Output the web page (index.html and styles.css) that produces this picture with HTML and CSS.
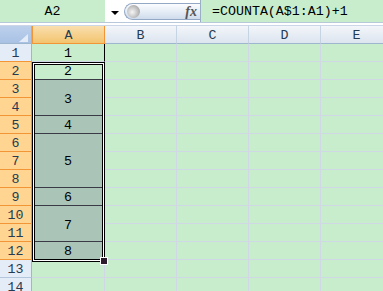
FILE: index.html
```html
<!DOCTYPE html>
<html>
<head>
<meta charset="utf-8">
<link rel="stylesheet" href="styles.css">
</head>
<body>
<div class="fbar">
  <div class="namebox">A2</div>
  <div class="dd"><svg width="8" height="4" viewBox="0 0 8 4"><polygon points="0,0 8,0 4,4" fill="#000"/></svg></div>
  <div class="pill"><span class="orb"></span><span class="fx">fx</span></div>
  <div class="formula">=COUNTA(A$1:A1)+1</div>
</div>
<div class="sep"></div>
<div class="sheet">
  <div class="rowheads">
    <div class="corner"></div>
    <div class="rh r1">1</div>
    <div class="rh sel">2</div>
    <div class="rh sel">3</div>
    <div class="rh sel">4</div>
    <div class="rh sel">5</div>
    <div class="rh sel">6</div>
    <div class="rh sel">7</div>
    <div class="rh sel">8</div>
    <div class="rh sel">9</div>
    <div class="rh sel">10</div>
    <div class="rh sel">11</div>
    <div class="rh sel">12</div>
    <div class="rh">13</div>
    <div class="rh">14</div>
  </div>
  <div class="colA">
    <div class="ch csel">A</div>
    <div class="cell a1">1</div>
    <div class="cell act">2</div>
    <div class="cell sc h2">3</div>
    <div class="cell sc">4</div>
    <div class="cell sc h3">5</div>
    <div class="cell sc">6</div>
    <div class="cell sc h2">7</div>
    <div class="cell sc">8</div>
    <div class="cell"></div>
    <div class="cell"></div>
  </div>
  <div class="rest">
    <div class="heads">
      <div class="ch">B</div>
      <div class="ch">C</div>
      <div class="ch">D</div>
      <div class="ch">E</div>
    </div>
    <div class="blank"></div>
  </div>
  <div class="selection"><span class="handle"></span></div>
</div>
</body>
</html>
```

FILE: styles.css
```css
* { box-sizing: border-box; margin: 0; padding: 0; }
html, body { width: 383px; height: 291px; overflow: hidden; background: #fff; }
body { font-family: "Liberation Mono", "DejaVu Sans Mono", monospace; font-size: 13.3px; color: #000; }

.fbar { display: flex; height: 22px; background: #fff; }
.namebox { width: 105px; background: #c7edcc; display: flex; align-items: center; justify-content: center; color: #000; padding-top: 1px; }
.dd { width: 19px; display: flex; align-items: center; justify-content: center; padding-top: 4px; }
.dd svg { display: block; }
.pill {
  align-self: flex-start; margin-top: 3px; width: 76px; height: 17px;
  border: 1px solid #93a8c4; border-right: none; border-radius: 9px 0 0 9px;
  background: linear-gradient(#fbfcfe, #e6edf6 50%, #cfdbec);
  display: flex; align-items: center; justify-content: space-between;
  padding: 0 3px 0 2px;
}
.orb {
  width: 13px; height: 13px; border-radius: 50%;
  background: radial-gradient(circle at 40% 55%, #f6f6f6 0, #c9c9c9 45%, #8c8c8c 100%);
}
.fx { font-family: "Liberation Serif", serif; font-style: italic; font-weight: bold; font-size: 14px; color: #555; padding-top: 1px; }
.formula { flex: 1; background: #c7edcc; border-left: 1px solid #9aaec6; padding-left: 11px; padding-top: 1px; display: flex; align-items: center; }

.sep { height: 4px; border-top: 1px solid #b7c8db; border-bottom: 1px solid #cbd7e6; background: #fff; }

.sheet { position: relative; display: flex; height: 265px; overflow: hidden; }
.rowheads { width: 32px; display: flex; flex-direction: column; flex: none; }
.corner {
  height: 18px; position: relative; flex: none;
  background: linear-gradient(#bcd0ec, #a9c2e4);
  border-right: 1px solid #9eb6ce; border-bottom: 1px solid #9eb6ce;
}
.corner::after {
  content: ""; position: absolute; right: 3px; bottom: 1px; width: 0; height: 0;
  border-left: 9px solid transparent; border-bottom: 8px solid #e4ecf7;
}
.rh {
  height: 18px; flex: none; display: flex; align-items: center; justify-content: center;
  padding-top: 2px;
  background: #e4ecf7; color: #243b53;
  border-right: 1px solid #9eb6ce; border-bottom: 1px solid #b4c6dc;
}
.rh.r1 { border-bottom-color: #f29536; }
.rh.sel { background: #ffd591; border-right-color: #f29536; border-bottom-color: #f29536; }

.colA { width: 73px; display: flex; flex-direction: column; flex: none; }
.ch {
  height: 18px; flex: none; width: 72px; display: flex; align-items: center; justify-content: center;
  padding-top: 1px;
  background: linear-gradient(#f3f6fa, #dce4ef); color: #243b53;
  border-right: 1px solid #c5d3e3; border-bottom: 1px solid #9eb6ce;
}
.ch.csel {
  width: 73px;
  background: linear-gradient(#f9dfae, #f3c46f);
  border-left: 1px solid #f29536; border-right: 1px solid #f29536; border-bottom: 1px solid #f29536;
}
.cell {
  height: 18px; flex: none; display: flex; align-items: center; justify-content: center;
  padding-top: 2px;
  background: #c7edcc; border-right: 1px solid #d0d7e5; border-bottom: 1px solid #d0d7e5;
}
.cell.a1 { border-right-color: #000; }
.cell.act { border-bottom-color: #3a3a46; }
.cell.sc { background: #abc4b8; border-bottom-color: #3a3a46; }
.cell.h2 { height: 36px; padding-top: 4px; }
.cell.h3 { height: 54px; }

.rest { flex: 1; display: flex; flex-direction: column; min-width: 0; }
.heads { display: flex; }
.blank {
  flex: 1;
  background-color: #c7edcc;
  background-image:
    linear-gradient(to right, transparent 71px, #d0d7e5 71px),
    linear-gradient(to bottom, transparent 17px, #d0d7e5 17px);
  background-size: 72px 100%, 100% 18px;
}

.selection {
  position: absolute; left: 32px; top: 36px; width: 73px; height: 200px;
  border: 1px solid #000;
  box-shadow: inset 0 0 0 1px #fff, inset 0 0 0 2px #000;
  pointer-events: none;
}
.handle {
  position: absolute; right: -3px; bottom: -3px; width: 6px; height: 6px;
  background: #2b1b2b; box-shadow: 0 0 0 1px #fff;
}
```
